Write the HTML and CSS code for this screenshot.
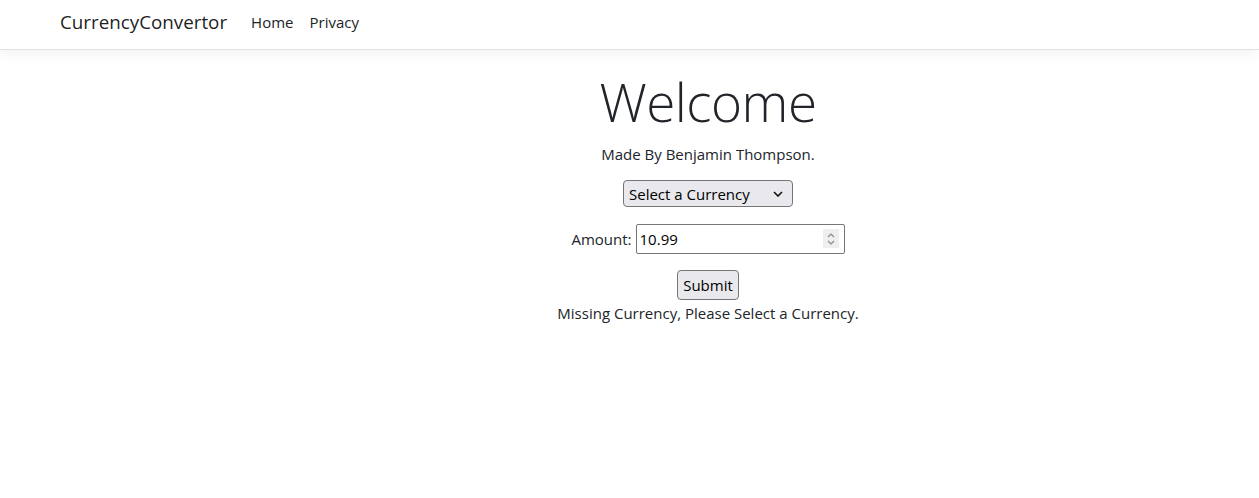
FILE: index.html
```html
<!DOCTYPE html>
<html lang="en">
<head>
<meta charset="utf-8">
<title>Home Page - CurrencyConvertor</title>
<link rel="stylesheet" href="styles.css">
</head>
<body>
<header>
  <nav class="navbar">
    <div class="nav-inner">
      <a class="brand" href="#">CurrencyConvertor</a>
      <ul class="nav-list">
        <li><a class="nav-link" href="#">Home</a></li>
        <li><a class="nav-link" href="#">Privacy</a></li>
      </ul>
    </div>
  </nav>
</header>
<main class="main">
  <h1 class="title">Welcome</h1>
  <p class="byline">Made By Benjamin Thompson.</p>
  <form class="form">
    <div class="row">
      <div class="select">
        <span>Select a Currency</span>
        <svg class="chev" width="10" height="6" viewBox="0 0 10 6"><path d="M1 1 L5 5 L9 1" fill="none" stroke="#111" stroke-width="1.6"/></svg>
      </div>
    </div>
    <div class="row amount-row">
      <label class="label">Amount:</label>
      <div class="number">
        <span class="value">10.99</span>
        <span class="spin">
          <svg width="14" height="18" viewBox="0 0 14 18"><path d="M4 7 L7 4 L10 7" fill="none" stroke="#8a8a8a" stroke-width="1.2"/><path d="M4 11 L7 14 L10 11" fill="none" stroke="#8a8a8a" stroke-width="1.2"/></svg>
        </span>
      </div>
    </div>
    <div class="row submit-row">
      <button type="button" class="btn">Submit</button>
    </div>
    <p class="msg">Missing Currency, Please Select a Currency.</p>
  </form>
</main>
</body>
</html>
```

FILE: styles.css
```css
* { box-sizing: border-box; }
html, body { margin: 0; padding: 0; }
body {
  font-family: "Open Sans", "Noto Sans", sans-serif;
  font-size: 15px;
  color: #212529;
  background: #fff;
  width: 1259px;
  height: 498px;
  overflow: hidden;
}
a { text-decoration: none; }

.navbar {
  height: 50px;
  border-bottom: 1px solid #dee2e6;
  box-shadow: 0 4px 12px rgba(0,0,0,0.05);
  background: #fff;
}
.nav-inner {
  display: flex;
  align-items: center;
  height: 44px;
  padding-left: 60px;
}
.brand {
  font-size: 18.8px;
  color: rgba(0,0,0,0.9);
  margin-right: 16px;
}
.nav-list {
  display: flex;
  list-style: none;
  margin: 0;
  padding: 0;
  gap: 0;
}
.nav-link {
  display: block;
  padding: 8px 8px;
  font-size: 15px;
  color: #212529;
}

.main {
  padding-left: 157px;
  padding-top: 20px;
  text-align: center;
}
.title {
  font-size: 53px;
  font-weight: 300;
  line-height: 1.2;
  margin: 0 0 8px;
  letter-spacing: -0.5px;
}
.byline {
  margin: 0 0 14px;
  line-height: 24px;
}
.form { margin: 0; }
.row {
  display: flex;
  justify-content: center;
  align-items: center;
}
.select {
  width: 170px;
  height: 27px;
  border: 1px solid #767676;
  border-radius: 4px;
  background: #e9e9ed;
  display: flex;
  align-items: center;
  justify-content: space-between;
  padding: 1px 9px 0 5px;
  font-size: 15px;
  color: #000;
}
.amount-row { margin-top: 17px; gap: 4px; }
.label { font-size: 15px; }
.number {
  width: 209px;
  height: 30px;
  border: 1px solid #767676;
  border-radius: 2px;
  display: flex;
  align-items: center;
  justify-content: space-between;
  padding: 0 5px 0 3px;
  font-size: 15px;
  color: #000;
}
.spin {
  display: flex;
  align-items: center;
  justify-content: center;
  width: 16px;
  height: 19px;
  background: #efefef;
}
.submit-row { margin-top: 16px; }
.btn {
  height: 30px;
  width: 62px;
  padding: 0;
  border: 1px solid #767676;
  border-radius: 4px;
  background: #e9e9ed;
  font-family: inherit;
  font-size: 15px;
  color: #000;
}
.msg {
  margin: 1px 0 0;
  line-height: 24px;
}
```
